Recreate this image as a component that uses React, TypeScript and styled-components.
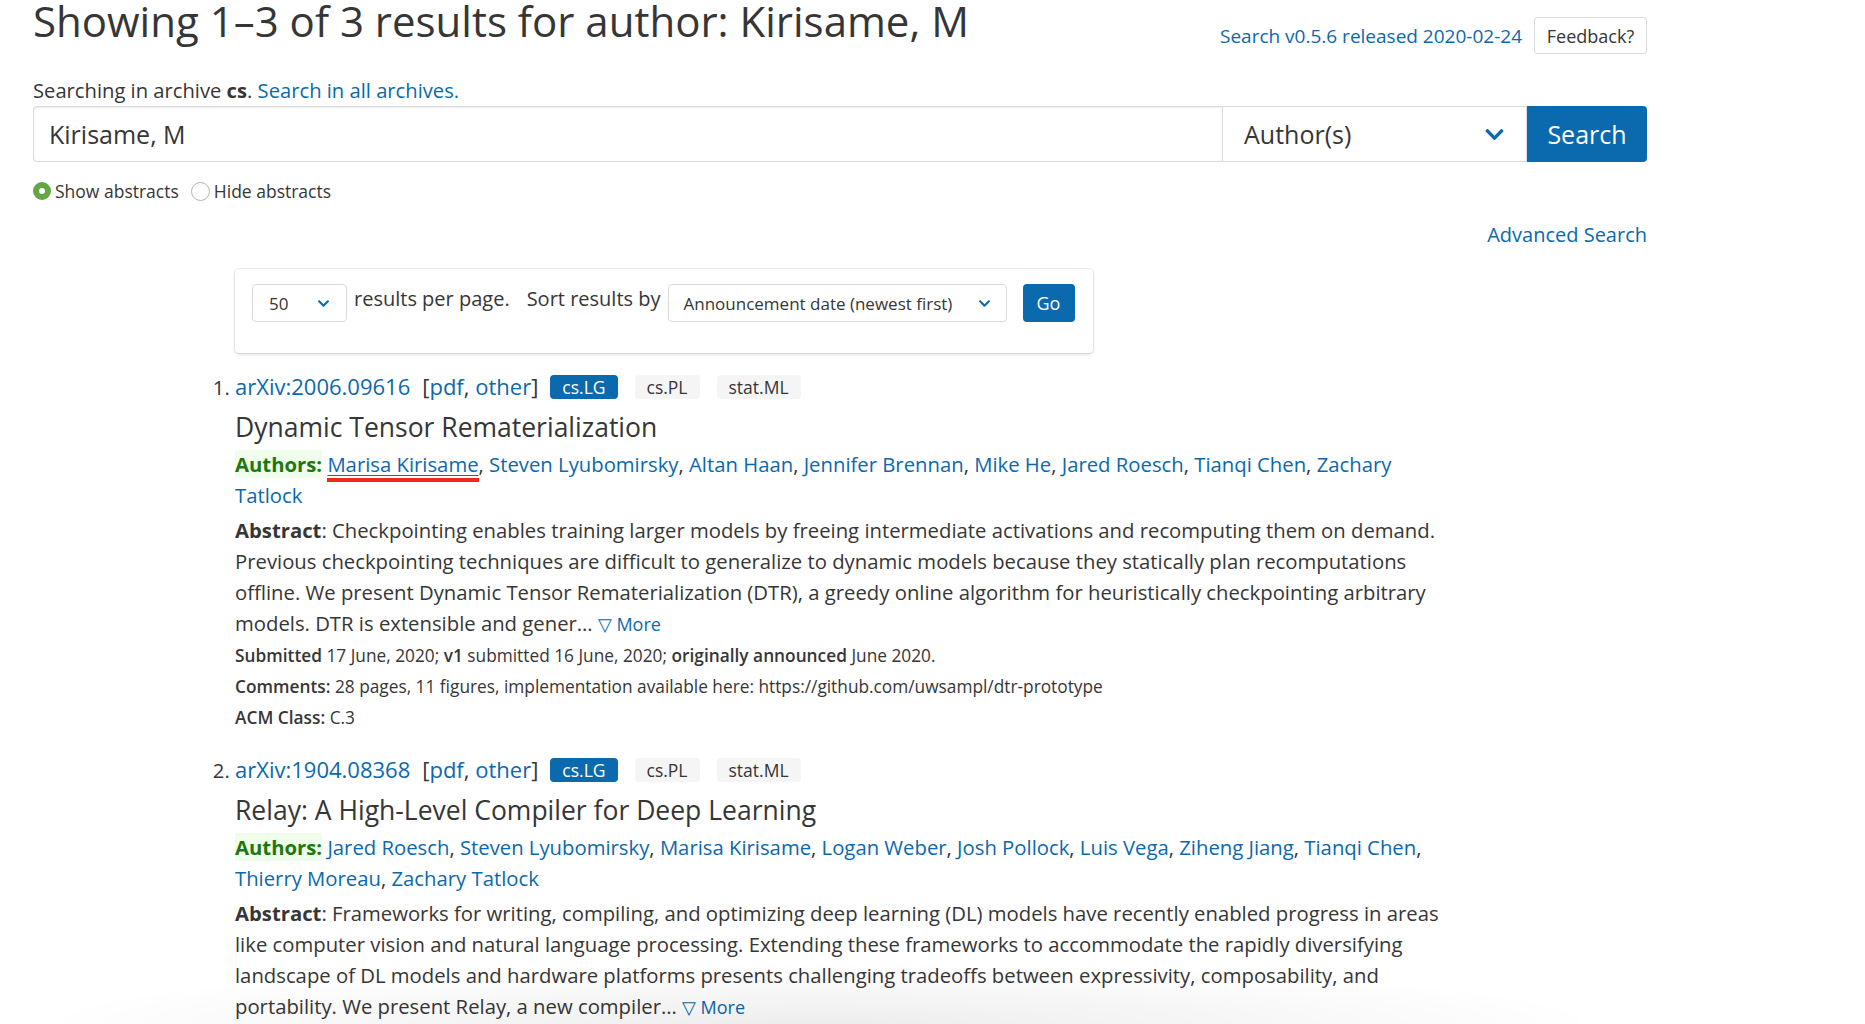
import styled, { createGlobalStyle } from "styled-components"
import { FaChevronDown } from "react-icons/fa"

const BLUE = "#0b69ad"
const TEXT = "#363636"

const GlobalStyle = createGlobalStyle`
  body {
    margin: 0;
    background: #fff;
    color: ${TEXT};
    font-family: "Open Sans", "DejaVu Sans", sans-serif;
  }
  a {
    color: ${BLUE};
    text-decoration: none;
  }
`

const Page = styled.div`
  width: 1614px;
  margin-left: 33px;
`

const Header = styled.header`
  display: flex;
  justify-content: space-between;
  align-items: flex-start;
`

const Title = styled.h1`
  margin: 0;
  font-size: 42px;
  font-weight: 400;
  line-height: 1;
`

const Release = styled.div`
  display: flex;
  align-items: center;
  gap: 12px;
  margin-top: 17px;
  font-size: 19px;
`

const Feedback = styled.button`
  font-family: inherit;
  font-size: 18px;
  color: ${TEXT};
  background: #fff;
  border: 1px solid #dbdbdb;
  border-radius: 3px;
  height: 37px;
  width: 113px;
  padding: 0;
`

const ArchiveNote = styled.p`
  margin: 23px 0 0;
  font-size: 20.2px;
  line-height: 27px;
`

const SearchRow = styled.div`
  display: flex;
  height: 56px;
  margin-top: 2px;
`

const QueryInput = styled.div`
  flex: 1;
  display: flex;
  align-items: center;
  padding-left: 15px;
  font-size: 25px;
  border: 1px solid #dbdbdb;
  border-radius: 4px 0 0 4px;
  box-shadow: inset 0 1px 2px rgba(10, 10, 10, 0.08);
`

const Select = styled.div<{ $w: number; $size: number; $pad: number; $radius?: string }>`
  width: ${(p) => p.$w}px;
  box-sizing: border-box;
  display: flex;
  align-items: center;
  justify-content: space-between;
  padding: 0 ${(p) => p.$pad}px 0 ${(p) => p.$pad}px;
  font-size: ${(p) => p.$size}px;
  color: ${TEXT};
  background: #fff;
  border: 1px solid #dbdbdb;
  border-radius: ${(p) => p.$radius ?? "4px"};
  svg {
    color: ${BLUE};
  }
`

const FieldSelect = styled(Select)`
  border-left: none;
`

const Button = styled.button<{ $size: number }>`
  font-family: inherit;
  font-size: ${(p) => p.$size}px;
  color: #fff;
  background: ${BLUE};
  border: none;
  padding: 0;
`

const SearchButton = styled(Button)`
  width: 120px;
  border-radius: 0 4px 4px 0;
`

const Radios = styled.div`
  display: flex;
  align-items: center;
  margin-top: 17px;
  font-size: 17.5px;
`

const Radio = styled.label<{ $on?: boolean }>`
  display: flex;
  align-items: center;
  gap: 4px;
  margin-right: 12px;
  &::before {
    content: "";
    width: ${(p) => (p.$on ? 18 : 19)}px;
    height: ${(p) => (p.$on ? 18 : 19)}px;
    box-sizing: border-box;
    border-radius: 50%;
    background: #fff;
    border: ${(p) => (p.$on ? "6px solid #62a744" : "1px solid #b5b5b5")};
  }
`

const AdvancedRow = styled.div`
  display: flex;
  justify-content: flex-end;
  margin-top: 18px;
  font-size: 20px;
`

const Column = styled.main`
  margin-left: 202px;
  width: 1215px;
`

const SortBox = styled.div`
  width: 858px;
  height: 84px;
  box-sizing: border-box;
  margin-top: 21px;
  padding: 15px 14px 0 17px;
  border-radius: 4px;
  box-shadow: 0 2px 3px rgba(10, 10, 10, 0.1), 0 0 0 1px rgba(10, 10, 10, 0.08);
  display: flex;
  align-items: flex-start;
  gap: 7px;
`

const SortLabel = styled.span<{ $gap?: number }>`
  font-size: 20px;
  line-height: 30px;
  margin-left: ${(p) => p.$gap ?? 0}px;
`

const SmallSelect = styled(Select)`
  height: 38px;
`

const GoButton = styled(Button)`
  width: 52px;
  height: 38px;
  border-radius: 4px;
  margin-left: 9px;
`

const Results = styled.ol`
  margin: 18px 0 0;
  padding: 0;
  font-size: 20.3px;
`

const Result = styled.li`
  line-height: 31px;
  margin-bottom: 21px;
`

const IdLine = styled.div`
  display: flex;
  align-items: center;
  gap: 12px;
  font-size: 22px;
  line-height: 31px;
`

const Tag = styled.span<{ $primary?: boolean }>`
  font-size: 17.5px;
  line-height: 24px;
  padding: 0 12px;
  border-radius: 4px;
  margin-left: ${(p) => (p.$primary ? 0 : 5)}px;
  color: ${(p) => (p.$primary ? "#fff" : TEXT)};
  background: ${(p) => (p.$primary ? BLUE : "#f5f5f5")};
`

const PaperTitle = styled.p`
  margin: 10px 0 0;
  font-size: 26.5px;
  font-weight: 500;
  line-height: 31px;
`

const Authors = styled.p`
  margin: 6px 0 0;
  a {
    color: ${BLUE};
  }
`

const AuthorsLabel = styled.span`
  color: #1c780c;
  font-weight: 700;
  background: #effdea;
`

const Marked = styled.a`
  position: relative;
  text-decoration: underline;
  text-underline-offset: 3px;
  text-decoration-thickness: 1px;
  &::after {
    content: "";
    position: absolute;
    left: 0;
    right: 0;
    bottom: -4px;
    height: 4px;
    background: #f02a19;
  }
`

const Abstract = styled.p`
  margin: 4px 0 0;
`

const More = styled.a`
  font-size: 18px;
`

const Meta = styled.p`
  margin: 0;
  font-size: 17.3px;
  line-height: 31px;
  b {
    font-weight: 600;
  }
`

const Shade = styled.div`
  position: fixed;
  left: 0;
  right: 0;
  bottom: 0;
  height: 60px;
  pointer-events: none;
  background: radial-gradient(ellipse 42% 100% at 44% 100%, rgba(0, 0, 0, 0.07), rgba(0, 0, 0, 0));
`

type Paper = {
  id: string
  title: string
  authors: string[]
  marked?: string
  abstract: string
  meta?: boolean
}

const papers: Paper[] = [
  {
    id: "2006.09616",
    title: "Dynamic Tensor Rematerialization",
    authors: [
      "Marisa Kirisame",
      "Steven Lyubomirsky",
      "Altan Haan",
      "Jennifer Brennan",
      "Mike He",
      "Jared Roesch",
      "Tianqi Chen",
      "Zachary Tatlock",
    ],
    marked: "Marisa Kirisame",
    abstract:
      "Checkpointing enables training larger models by freeing intermediate activations and recomputing them on demand. Previous checkpointing techniques are difficult to generalize to dynamic models because they statically plan recomputations offline. We present Dynamic Tensor Rematerialization (DTR), a greedy online algorithm for heuristically checkpointing arbitrary models. DTR is extensible and gener…",
    meta: true,
  },
  {
    id: "1904.08368",
    title: "Relay: A High-Level Compiler for Deep Learning",
    authors: [
      "Jared Roesch",
      "Steven Lyubomirsky",
      "Marisa Kirisame",
      "Logan Weber",
      "Josh Pollock",
      "Luis Vega",
      "Ziheng Jiang",
      "Tianqi Chen",
      "Thierry Moreau",
      "Zachary Tatlock",
    ],
    abstract:
      "Frameworks for writing, compiling, and optimizing deep learning (DL) models have recently enabled progress in areas like computer vision and natural language processing. Extending these frameworks to accommodate the rapidly diversifying landscape of DL models and hardware platforms presents challenging tradeoffs between expressivity, composability, and portability. We present Relay, a new compiler…",
  },
]

function PaperItem({ paper }: { paper: Paper }) {
  return (
    <Result>
      <IdLine>
        <a href="#">arXiv:{paper.id}</a>
        <span>
          [<a href="#">pdf</a>, <a href="#">other</a>]
        </span>
        <Tag $primary>cs.LG</Tag>
        <Tag>cs.PL</Tag>
        <Tag>stat.ML</Tag>
      </IdLine>
      <PaperTitle>{paper.title}</PaperTitle>
      <Authors>
        <AuthorsLabel>Authors:</AuthorsLabel>{" "}
        {paper.authors.map((name, i) => (
          <span key={name}>
            {name === paper.marked ? <Marked href="#">{name}</Marked> : <a href="#">{name}</a>}
            {i < paper.authors.length - 1 ? ", " : ""}
          </span>
        ))}
      </Authors>
      <Abstract>
        <b>Abstract</b>: {paper.abstract} <More href="#">▽ More</More>
      </Abstract>
      {paper.meta && (
        <>
          <Meta>
            <b>Submitted</b> 17 June, 2020; <b>v1</b> submitted 16 June, 2020; <b>originally announced</b> June
            2020.
          </Meta>
          <Meta>
            <b>Comments:</b> 28 pages, 11 figures, implementation available here:
            https://github.com/uwsampl/dtr-prototype
          </Meta>
          <Meta>
            <b>ACM Class:</b> C.3
          </Meta>
        </>
      )}
    </Result>
  )
}

export default function App() {
  return (
    <>
      <GlobalStyle />
      <Page>
        <Header>
          <Title>Showing 1–3 of 3 results for author: Kirisame, M</Title>
          <Release>
            <a href="#">Search v0.5.6 released 2020-02-24</a>
            <Feedback>Feedback?</Feedback>
          </Release>
        </Header>
        <ArchiveNote>
          Searching in archive <b>cs</b>. <a href="#">Search in all archives.</a>
        </ArchiveNote>
        <SearchRow>
          <QueryInput>Kirisame, M</QueryInput>
          <FieldSelect $w={304} $size={25} $pad={21} $radius="0">
            Author(s)
            <FaChevronDown size={21} />
          </FieldSelect>
          <SearchButton $size={25}>Search</SearchButton>
        </SearchRow>
        <Radios>
          <Radio $on>Show abstracts</Radio>
          <Radio>Hide abstracts</Radio>
        </Radios>
        <AdvancedRow>
          <a href="#">Advanced Search</a>
        </AdvancedRow>
        <Column>
          <SortBox>
            <SmallSelect $w={95} $size={17} $pad={16}>
              50
              <FaChevronDown size={13} />
            </SmallSelect>
            <SortLabel>results per page.</SortLabel>
            <SortLabel $gap={10}>Sort results by</SortLabel>
            <SmallSelect $w={339} $size={17} $pad={15}>
              Announcement date (newest first)
              <FaChevronDown size={13} />
            </SmallSelect>
            <GoButton $size={18}>Go</GoButton>
          </SortBox>
          <Results>
            {papers.map((p) => (
              <PaperItem key={p.id} paper={p} />
            ))}
          </Results>
        </Column>
      </Page>
      <Shade />
    </>
  )
}
